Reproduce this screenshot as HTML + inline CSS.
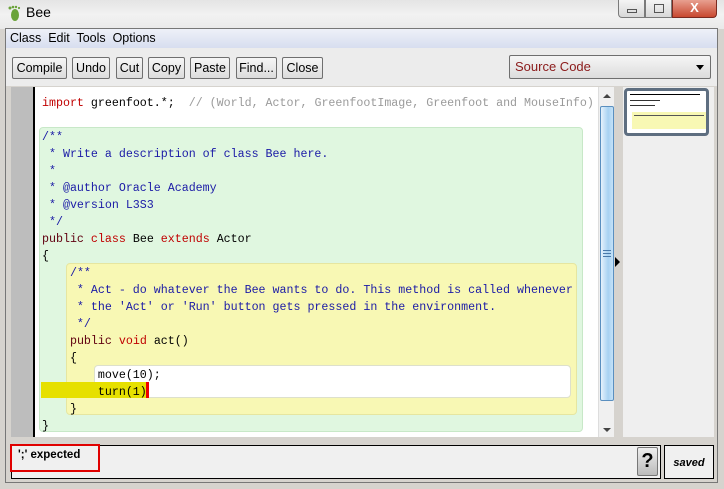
<!DOCTYPE html>
<html><head><meta charset="utf-8"><style>
*{margin:0;padding:0;box-sizing:border-box}
body{width:724px;height:489px;overflow:hidden;position:relative;background:#d6d3ce;font-family:"Liberation Sans",sans-serif;font-size:12px}
.a{position:absolute}
.btn{position:absolute;top:57px;height:22px;border:1px solid #6f6f6f;border-radius:2px;background:linear-gradient(#f6f6f6,#dcdcdc);font-size:12.5px;line-height:20px;text-align:center;color:#000}
.code{font-family:"Liberation Mono",monospace;font-size:11.65px;white-space:pre;line-height:17px}
.cm{color:#1a1aa6}.kw{color:#c00000}.pb{color:#600010}.gr{color:#9a9a9a}
</style></head><body>
<div class="a" style="left:0;top:0;width:724px;height:29px;background:linear-gradient(#e4e4e4,#f2f2f2 50%,#e9e9e9)"></div>
<svg class="a" style="left:5px;top:4px" width="18" height="18" viewBox="0 0 18 18"><ellipse cx="10" cy="11" rx="4" ry="6" fill="#6aa33a"/><circle cx="5" cy="4" r="1.5" fill="#6aa33a"/><circle cx="8" cy="3" r="1.3" fill="#6aa33a"/><circle cx="11" cy="3" r="1.2" fill="#6aa33a"/><circle cx="14" cy="4" r="1.1" fill="#6aa33a"/></svg>
<div class="a" style="left:26px;top:4px;font-size:14px">Bee</div>
<div class="a" style="left:618px;top:0;width:27px;height:18px;border:1px solid #7a7a7a;border-top:0;border-radius:0 0 0 4px;background:linear-gradient(#f4f4f4,#d8d8d8)"><div class="a" style="left:8px;top:9px;width:10px;height:4px;border:1px solid #555"></div></div>
<div class="a" style="left:645px;top:0;width:27px;height:18px;border:1px solid #7a7a7a;border-top:0;background:linear-gradient(#f4f4f4,#d8d8d8)"><div class="a" style="left:8px;top:4px;width:10px;height:9px;border:1px solid #555"></div></div>
<div class="a" style="left:672px;top:0;width:45px;height:18px;border:1px solid #7a2a20;border-top:0;border-radius:0 0 4px 0;background:linear-gradient(#e8a090,#c84830);color:#fff;font-weight:bold;font-size:13px;text-align:center;line-height:16px">X</div>
<div class="a" style="left:5px;top:28px;width:713px;height:455px;border:1px solid #777;background:#d6d3ce"></div>
<div class="a" style="left:6px;top:29px;width:711px;height:19px;background:linear-gradient(#eef1f8,#d7deef);font-size:12.5px;line-height:18px;padding-left:4px">Class&nbsp; Edit&nbsp; Tools&nbsp; Options</div>
<div class="a" style="left:6px;top:48px;width:711px;height:38px;background:#ececec"></div>
<div class="btn" style="left:12px;width:55px">Compile</div>
<div class="btn" style="left:72px;width:38px">Undo</div>
<div class="btn" style="left:116px;width:27px">Cut</div>
<div class="btn" style="left:148px;width:37px">Copy</div>
<div class="btn" style="left:190px;width:40px">Paste</div>
<div class="btn" style="left:236px;width:41px">Find...</div>
<div class="btn" style="left:282px;width:41px">Close</div>
<div class="btn" style="left:509px;width:202px;height:24px;top:55px;text-align:left;padding-left:5px;color:#8b1a1a;font-size:13px;line-height:22px">Source Code<div class="a" style="right:6px;top:9px;width:0;height:0;border-left:4px solid transparent;border-right:4px solid transparent;border-top:5px solid #000"></div></div>
<div class="a" style="left:11px;top:87px;width:22px;height:350px;background:#bdbdbd"></div>
<div class="a" style="left:33px;top:87px;width:2px;height:350px;background:#000"></div>
<div class="a" style="left:35px;top:87px;width:563px;height:350px;background:#fff"></div>
<div class="a" style="left:39px;top:127px;width:544px;height:305px;background:#e0f7e0;border:1px solid #c8e8c8;border-radius:4px"></div>
<div class="a" style="left:66px;top:263px;width:511px;height:152px;background:#f8f8b4;border:1px solid #e6e6a0;border-radius:4px"></div>
<div class="a" style="left:94px;top:365px;width:477px;height:33px;background:#fff;border:1px solid #dde0cc;border-radius:4px"></div>
<div class="a" style="left:41px;top:382px;width:107px;height:16px;background:#e6e000"></div>
<div class="a" style="left:146px;top:382px;width:3px;height:16px;background:#e00;"></div>
<div class="a code" style="left:42px;top:95px"><span class="kw">import</span> greenfoot.*;  <span class="gr">// (World, Actor, GreenfootImage, Greenfoot and MouseInfo)</span>

<span class="cm">/**
 * Write a description of class Bee here.
 *
 * @author Oracle Academy
 * @version L3S3
 */</span>
<span class="pb">public</span> <span class="kw">class</span> Bee <span class="kw">extends</span> Actor
{
    <span class="cm">/**
     * Act - do whatever the Bee wants to do. This method is called whenever
     * the 'Act' or 'Run' button gets pressed in the environment.
     */</span>
    <span class="pb">public</span> <span class="kw">void</span> act()
    {
        move(10);
        turn(1)
    }
}</div>
<div class="a" style="left:598px;top:87px;width:16px;height:350px;background:#f0f0f0;border-left:1px solid #ddd"></div>
<div class="a" style="left:603px;top:94px;width:0;height:0;border-left:4px solid transparent;border-right:4px solid transparent;border-bottom:4px solid #444"></div>
<div class="a" style="left:603px;top:428px;width:0;height:0;border-left:4px solid transparent;border-right:4px solid transparent;border-top:4px solid #444"></div>
<div class="a" style="left:600px;top:106px;width:14px;height:295px;border:1px solid #5a8fbf;border-radius:2px;background:linear-gradient(90deg,#e6f2fc,#a8d2f2 60%,#c4e2f8)"></div>
<div class="a" style="left:603px;top:250px;width:8px;height:7px;border-top:1px solid #4a7aaa;border-bottom:1px solid #4a7aaa"></div>
<div class="a" style="left:603px;top:253px;width:8px;height:1px;background:#4a7aaa"></div>
<div class="a" style="left:615px;top:257px;width:0;height:0;border-top:5px solid transparent;border-bottom:5px solid transparent;border-left:5px solid #000"></div>
<div class="a" style="left:623px;top:87px;width:91px;height:350px;background:#efefef"></div>
<div class="a" style="left:624px;top:88px;width:85px;height:48px;border:3px solid #5e6e80;border-radius:4px;background:#fff"></div>
<div class="a" style="left:632px;top:112px;width:74px;height:17px;background:#f8f8b4"></div>
<div class="a" style="left:630px;top:94px;width:70px;height:1px;background:#000"></div>
<div class="a" style="left:630px;top:100px;width:30px;height:1px;background:#333"></div>
<div class="a" style="left:630px;top:105px;width:25px;height:1px;background:#333"></div>
<div class="a" style="left:634px;top:115px;width:70px;height:1px;background:#555"></div>
<div class="a" style="left:11px;top:445px;width:650px;height:34px;border:1px solid #000;background:#f0f0f0"></div>
<div class="a" style="left:10px;top:444px;width:90px;height:28px;border:2px solid #e00000"></div>
<div class="a" style="left:18px;top:449px;font-size:11.5px;font-weight:bold">';' expected</div>
<div class="a" style="left:637px;top:447px;width:21px;height:29px;border:1px solid #777;border-radius:2px;background:linear-gradient(#eee,#bbb);font-weight:bold;font-size:20px;text-align:center;line-height:27px">?</div>
<div class="a" style="left:664px;top:445px;width:50px;height:34px;border:1px solid #000;background:#f0f0f0;font-style:italic;font-weight:bold;font-size:11px;text-align:center;line-height:34px">saved</div>
</body></html>
